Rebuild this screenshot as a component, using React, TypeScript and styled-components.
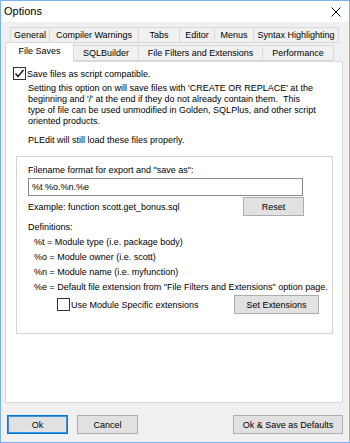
import React from "react";
import styled, { createGlobalStyle } from "styled-components";

const Global = createGlobalStyle`
  html, body { margin: 0; padding: 0; background: #ffffff; overflow: hidden; }
  #root { width: 350px; height: 443px; }
`;

const FONT = `"Liberation Sans", Arial, sans-serif`;

const Window = styled.div`
  width: 350px;
  height: 443px;
  box-sizing: border-box;
  border: 1px solid #7cb2e6;
  background: #f0f0f0;
  display: flex;
  flex-direction: column;
  font-family: ${FONT};
  font-size: 9px;
  color: #000;
`;

const TitleBar = styled.div`
  height: 21px;
  background: #ffffff;
  display: flex;
  align-items: center;
  justify-content: space-between;
  padding: 0 8px 0 3px;
  flex-shrink: 0;
`;

const Title = styled.span`
  font-size: 11px;
  line-height: 11px;
`;

const Body = styled.div`
  flex: 1;
  display: flex;
  flex-direction: column;
  padding: 5px 5px 0 4px;
`;

const TabRow = styled.div<{ $indent: number; $mt: number }>`
  display: flex;
  align-items: flex-end;
  padding-left: ${(p) => p.$indent}px;
  margin-top: ${(p) => p.$mt}px;
  position: relative;
`;

const Tab = styled.div<{ $w: number; $active?: boolean }>`
  width: ${(p) => p.$w}px;
  height: ${(p) => (p.$active ? 20 : 16)}px;
  box-sizing: border-box;
  border: 1px solid #d9d9d9;
  border-bottom: ${(p) => (p.$active ? "none" : "1px solid #d9d9d9")};
  margin-right: -1px;
  margin-bottom: ${(p) => (p.$active ? "-1px" : "0")};
  background: ${(p) => (p.$active ? "#ffffff" : "#f0f0f0")};
  position: relative;
  z-index: ${(p) => (p.$active ? 2 : 1)};
  display: flex;
  align-items: center;
  justify-content: center;
  white-space: nowrap;
  padding-bottom: ${(p) => (p.$active ? 3 : 0)}px;
`;

const Panel = styled.div`
  width: 338px;
  height: 342px;
  box-sizing: border-box;
  border: 1px solid #d9d9d9;
  background: #ffffff;
  display: flex;
  flex-direction: column;
  padding-top: 5px;
  position: relative;
  z-index: 1;
`;

const CheckRow = styled.label<{ $ml: number }>`
  display: flex;
  align-items: center;
  gap: 1px;
  margin-left: ${(p) => p.$ml}px;
  white-space: nowrap;
`;

const Box = styled.span`
  width: 13px;
  height: 13px;
  box-sizing: border-box;
  border: 1px solid #333333;
  background: #ffffff;
  display: inline-flex;
  align-items: center;
  justify-content: center;
  flex-shrink: 0;
`;

const Para = styled.div<{ $ml: number; $mt: number }>`
  margin-left: ${(p) => p.$ml}px;
  margin-top: ${(p) => p.$mt}px;
  line-height: 11px;
  white-space: pre;
`;

const Group = styled.div`
  margin: 10px 0 0 10px;
  width: 317px;
  height: 178px;
  box-sizing: border-box;
  border: 1px solid #d5d5d5;
  padding: 8px 0 0 11px;
  display: flex;
  flex-direction: column;
`;

const Input = styled.div`
  margin-top: 2px;
  width: 275px;
  height: 18px;
  box-sizing: border-box;
  border: 1px solid #8a8a8a;
  background: #fff;
  display: flex;
  align-items: center;
  padding-left: 3px;
`;

const Row = styled.div<{ $mt: number; $pr: number }>`
  display: flex;
  align-items: center;
  justify-content: space-between;
  margin-top: ${(p) => p.$mt}px;
  padding-right: ${(p) => p.$pr}px;
`;

const Button = styled.button<{ $w: number; $primary?: boolean }>`
  width: ${(p) => p.$w}px;
  height: 19px;
  box-sizing: border-box;
  border: 1px solid ${(p) => (p.$primary ? "#0078d7" : "#adadad")};
  box-shadow: ${(p) => (p.$primary ? "inset 0 0 0 1px #3d95de" : "none")};
  background: #e1e1e1;
  font-family: ${FONT};
  font-size: 9px;
  color: #000;
  padding: 0;
  display: flex;
  align-items: center;
  justify-content: center;
`;

const DefList = styled.div`
  margin-top: 2px;
`;

const DefLine = styled.div`
  margin-left: 6px;
  line-height: 15px;
  white-space: nowrap;
`;

const Footer = styled.div`
  display: flex;
  justify-content: space-between;
  align-items: center;
  padding: 12px 1px 0 2px;
`;

const ButtonGroup = styled.div`
  display: flex;
  gap: 9px;
`;

const Check = () => (
  <svg width="11" height="11" viewBox="0 0 11 11">
    <polyline points="1.5,5.5 4,8.5 9.5,2" fill="none" stroke="#000" strokeWidth="1.2" />
  </svg>
);

const CloseIcon = () => (
  <svg width="10" height="10" viewBox="0 0 10 10">
    <path d="M0.5 0.5 L9.5 9.5 M9.5 0.5 L0.5 9.5" stroke="#000" strokeWidth="1" />
  </svg>
);

const row1 = [
  { t: "General", w: 40 },
  { t: "Compiler Warnings", w: 90 },
  { t: "Tabs", w: 42 },
  { t: "Editor", w: 36 },
  { t: "Menus", w: 40 },
  { t: "Syntax Highlighting", w: 86 },
];

const row2 = [
  { t: "File Saves", w: 69, active: true },
  { t: "SQLBuilder", w: 66 },
  { t: "File Filters and Extensions", w: 125 },
  { t: "Performance", w: 72 },
];

export default function App() {
  return (
    <>
      <Global />
      <Window>
        <TitleBar>
          <Title>Options</Title>
          <CloseIcon />
        </TitleBar>
        <Body>
          <TabRow $indent={5} $mt={0}>
            {row1.map((r) => (
              <Tab key={r.t} $w={r.w}>{r.t}</Tab>
            ))}
          </TabRow>
          <TabRow $indent={0} $mt={-1}>
            {row2.map((r) => (
              <Tab key={r.t} $w={r.w} $active={r.active}>{r.t}</Tab>
            ))}
          </TabRow>
          <Panel>
            <CheckRow $ml={7}>
              <Box><Check /></Box>
              <span>Save files as script compatible.</span>
            </CheckRow>
            <Para $ml={22} $mt={3}>
              {"Setting this option on will save files with 'CREATE OR REPLACE' at the\nbeginning and '/' at the end if they do not already contain them.  This\ntype of file can be used unmodified in Golden, SQLPlus, and other script\noriented products."}
            </Para>
            <Para $ml={22} $mt={8}>PLEdit will still load these files properly.</Para>
            <Group>
              <Para $ml={0} $mt={0}>Filename format for export and "save as":</Para>
              <Input>%t %o.%n.%e</Input>
              <Row $mt={1} $pr={28}>
                <span>Example: function scott.get_bonus.sql</span>
                <Button $w={61}>Reset</Button>
              </Row>
              <Para $ml={0} $mt={6}>Definitions:</Para>
              <DefList>
                <DefLine>%t = Module type (i.e. package body)</DefLine>
                <DefLine>%o = Module owner (i.e. scott)</DefLine>
                <DefLine>%n = Module name (i.e. myfunction)</DefLine>
                <DefLine>%e = Default file extension from "File Filters and Extensions" option page.</DefLine>
              </DefList>
              <Row $mt={0} $pr={13}>
                <CheckRow $ml={29}>
                  <Box />
                  <span>Use Module Specific extensions</span>
                </CheckRow>
                <Button $w={85}>Set Extensions</Button>
              </Row>
            </Group>
          </Panel>
          <Footer>
            <ButtonGroup>
              <Button $w={61} $primary>Ok</Button>
              <Button $w={61}>Cancel</Button>
            </ButtonGroup>
            <Button $w={110}>Ok &amp; Save as Defaults</Button>
          </Footer>
        </Body>
      </Window>
    </>
  );
}
